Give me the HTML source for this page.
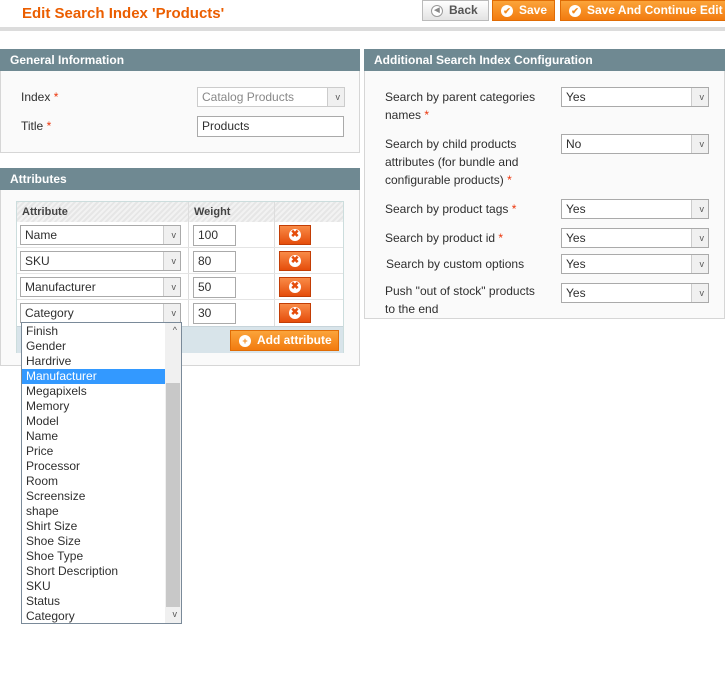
<!DOCTYPE html>
<html><head><style>
body{margin:0;width:725px;height:680px;background:#fff;font-family:"Liberation Sans",Arial,sans-serif;font-size:12px;color:#2f2f2f;position:relative;overflow:hidden}
.a{position:absolute}
.btn{position:absolute;top:0;height:19px;border:1px solid #e06c05;background:linear-gradient(#fba43a,#f27b0f);color:#fff;font-weight:bold;font-size:12px;line-height:19px;box-sizing:content-box;white-space:nowrap}
.ic{display:inline-block;width:12px;height:12px;border-radius:50%;background:#fff;color:#f28a1d;font-size:9px;line-height:12px;text-align:center;vertical-align:top;margin:4px 6px 0 8px}
.hd{position:absolute;height:22px;background:#6f8992;color:#fff;font-weight:bold;font-size:12px;line-height:22px;padding-left:10px;box-sizing:border-box}
.bd{position:absolute;background:#fafafa;border:1px solid #d6d6d6;border-top:0;box-sizing:border-box}
.sel{position:absolute;height:20px;border:1px solid #aaa;background:#fff;box-sizing:border-box;line-height:18px;padding-left:4px;font-size:12px}
.sel:after{content:"";position:absolute;right:0;top:0;width:16px;height:18px;border-left:1px solid #ccc;background:#f0f0f0}
.sel i{position:absolute;right:4px;top:0;z-index:2;font-style:normal;font-size:9px;color:#555}
.inp{position:absolute;height:21px;border:1px solid #aaa;background:#fff;box-sizing:border-box;line-height:19px;padding-left:4px}
.lbl{position:absolute;left:385px;line-height:18px;font-size:12px}
.r{color:#eb340a}
.del{position:absolute;left:279px;width:32px;height:20px;border:1px solid #c23d05;background:linear-gradient(#f98b47,#e54d0b);box-sizing:border-box}
.del b{position:absolute;left:9px;top:3px;width:12px;height:12px;border-radius:50%;background:#fff;color:#e54d0b;font-size:10px;line-height:12px;text-align:center}
.li{height:15px;line-height:15px;padding-left:4px;font-size:12px}
</style></head><body>
<div class="a" style="left:22px;top:5px;font-size:15px;font-weight:bold;color:#eb5e00">Edit Search Index 'Products'</div>
<div class="a" style="left:422px;top:0;width:65px;height:19px;border:1px solid #bbb;background:linear-gradient(#fff,#e3e3e3);line-height:19px;color:#555;font-weight:bold"><span class="ic" style="background:#fff;border:1px solid #999;width:10px;height:10px;color:#888;line-height:10px;font-size:7px">◀</span>Back</div>
<div class="btn" style="left:492px;width:61px"><span class="ic">✔</span>Save</div>
<div class="btn" style="left:560px;width:164px"><span class="ic">✔</span>Save And Continue Edit</div>
<div class="a" style="left:0;top:27px;width:725px;height:4px;background:#dcdcdc"></div>

<div class="hd" style="left:0;top:49px;width:360px">General Information</div>
<div class="bd" style="left:0;top:71px;width:360px;height:82px"></div>
<div class="lbl" style="left:21px;top:88px">Index <span class="r">*</span></div>
<div class="lbl" style="left:21px;top:117px">Title <span class="r">*</span></div>
<div class="sel" style="left:197px;top:87px;width:148px;color:#888;border-color:#ccc">Catalog Products<i>v</i></div>
<div class="inp" style="left:197px;top:116px;width:147px">Products</div>

<div class="hd" style="left:364px;top:49px;width:361px">Additional Search Index Configuration</div>
<div class="bd" style="left:364px;top:71px;width:361px;height:248px"></div>
<div class="lbl" style="top:88px">Search by parent categories<br>names <span class="r">*</span></div>
<div class="lbl" style="top:135px">Search by child products<br>attributes (for bundle and<br>configurable products) <span class="r">*</span></div>
<div class="lbl" style="top:200px">Search by product tags <span class="r">*</span></div>
<div class="lbl" style="top:229px">Search by product id <span class="r">*</span></div>
<div class="lbl" style="top:255px;left:386px">Search by custom options</div>
<div class="lbl" style="top:282px">Push "out of stock" products<br>to the end</div>
<div class="sel" style="left:561px;top:87px;width:148px">Yes<i>v</i></div>
<div class="sel" style="left:561px;top:134px;width:148px">No<i>v</i></div>
<div class="sel" style="left:561px;top:199px;width:148px">Yes<i>v</i></div>
<div class="sel" style="left:561px;top:228px;width:148px">Yes<i>v</i></div>
<div class="sel" style="left:561px;top:254px;width:148px">Yes<i>v</i></div>
<div class="sel" style="left:561px;top:283px;width:148px">Yes<i>v</i></div>

<div class="hd" style="left:0;top:168px;width:360px">Attributes</div>
<div class="bd" style="left:0;top:190px;width:360px;height:176px"></div>
<div class="a" style="left:16px;top:201px;width:328px;height:152px;border:1px solid #cdd;background:#fff;box-sizing:border-box"></div>
<div class="a" style="left:17px;top:202px;width:326px;height:20px;background:repeating-linear-gradient(135deg,#e6e6e6 0 2px,#f2f2f2 2px 4px)"></div>
<div class="a" style="left:188px;top:202px;width:1px;height:124px;background:#ddd"></div>
<div class="a" style="left:274px;top:202px;width:1px;height:124px;background:#ddd"></div>
<div class="a" style="left:22px;top:206px;font-weight:bold;font-size:11px;color:#444">Attribute</div>
<div class="a" style="left:194px;top:206px;font-weight:bold;font-size:11px;color:#444">Weight</div>
<div class="a" style="left:17px;top:247px;width:326px;height:1px;background:#e4e4e4"></div>
<div class="a" style="left:17px;top:273px;width:326px;height:1px;background:#e4e4e4"></div>
<div class="a" style="left:17px;top:299px;width:326px;height:1px;background:#e4e4e4"></div>
<div class="a" style="left:17px;top:326px;width:326px;height:26px;background:#d8e4ea;border-top:1px solid #c7d4da"></div>

<div class="sel" style="left:20px;top:225px;width:161px">Name<i>v</i></div>
<div class="sel" style="left:20px;top:251px;width:161px">SKU<i>v</i></div>
<div class="sel" style="left:20px;top:277px;width:161px">Manufacturer<i>v</i></div>
<div class="sel" style="left:20px;top:303px;width:161px">Category<i>v</i></div>
<div class="inp" style="left:193px;top:225px;width:43px">100</div>
<div class="inp" style="left:193px;top:251px;width:43px">80</div>
<div class="inp" style="left:193px;top:277px;width:43px">50</div>
<div class="inp" style="left:193px;top:303px;width:43px">30</div>
<div class="del" style="top:225px"><b>✖</b></div>
<div class="del" style="top:251px"><b>✖</b></div>
<div class="del" style="top:277px"><b>✖</b></div>
<div class="del" style="top:303px"><b>✖</b></div>
<div class="btn" style="left:230px;top:330px;width:107px;height:19px"><span class="ic">+</span>Add attribute</div>

<div class="a" style="left:21px;top:322px;width:161px;height:302px;border:1px solid #7a8a99;background:#fff;box-sizing:border-box;padding-top:1px">
<div class="a" style="right:0;top:0;width:16px;height:300px;background:#f0f0f0"></div>
<div class="a" style="right:1px;top:60px;width:14px;height:224px;background:#c8c8c8"></div>
<div class="a" style="right:4px;top:2px;font-size:9px;color:#555">^</div>
<div class="a" style="right:4px;top:286px;font-size:9px;color:#555">v</div>
<div style="width:143px">
<div class="li">Finish</div><div class="li">Gender</div><div class="li">Hardrive</div>
<div class="li" style="background:#3399ff;color:#fff">Manufacturer</div>
<div class="li">Megapixels</div><div class="li">Memory</div><div class="li">Model</div><div class="li">Name</div><div class="li">Price</div><div class="li">Processor</div><div class="li">Room</div><div class="li">Screensize</div><div class="li">shape</div><div class="li">Shirt Size</div><div class="li">Shoe Size</div><div class="li">Shoe Type</div><div class="li">Short Description</div><div class="li">SKU</div><div class="li">Status</div><div class="li">Category</div>
</div></div>
</body></html>
